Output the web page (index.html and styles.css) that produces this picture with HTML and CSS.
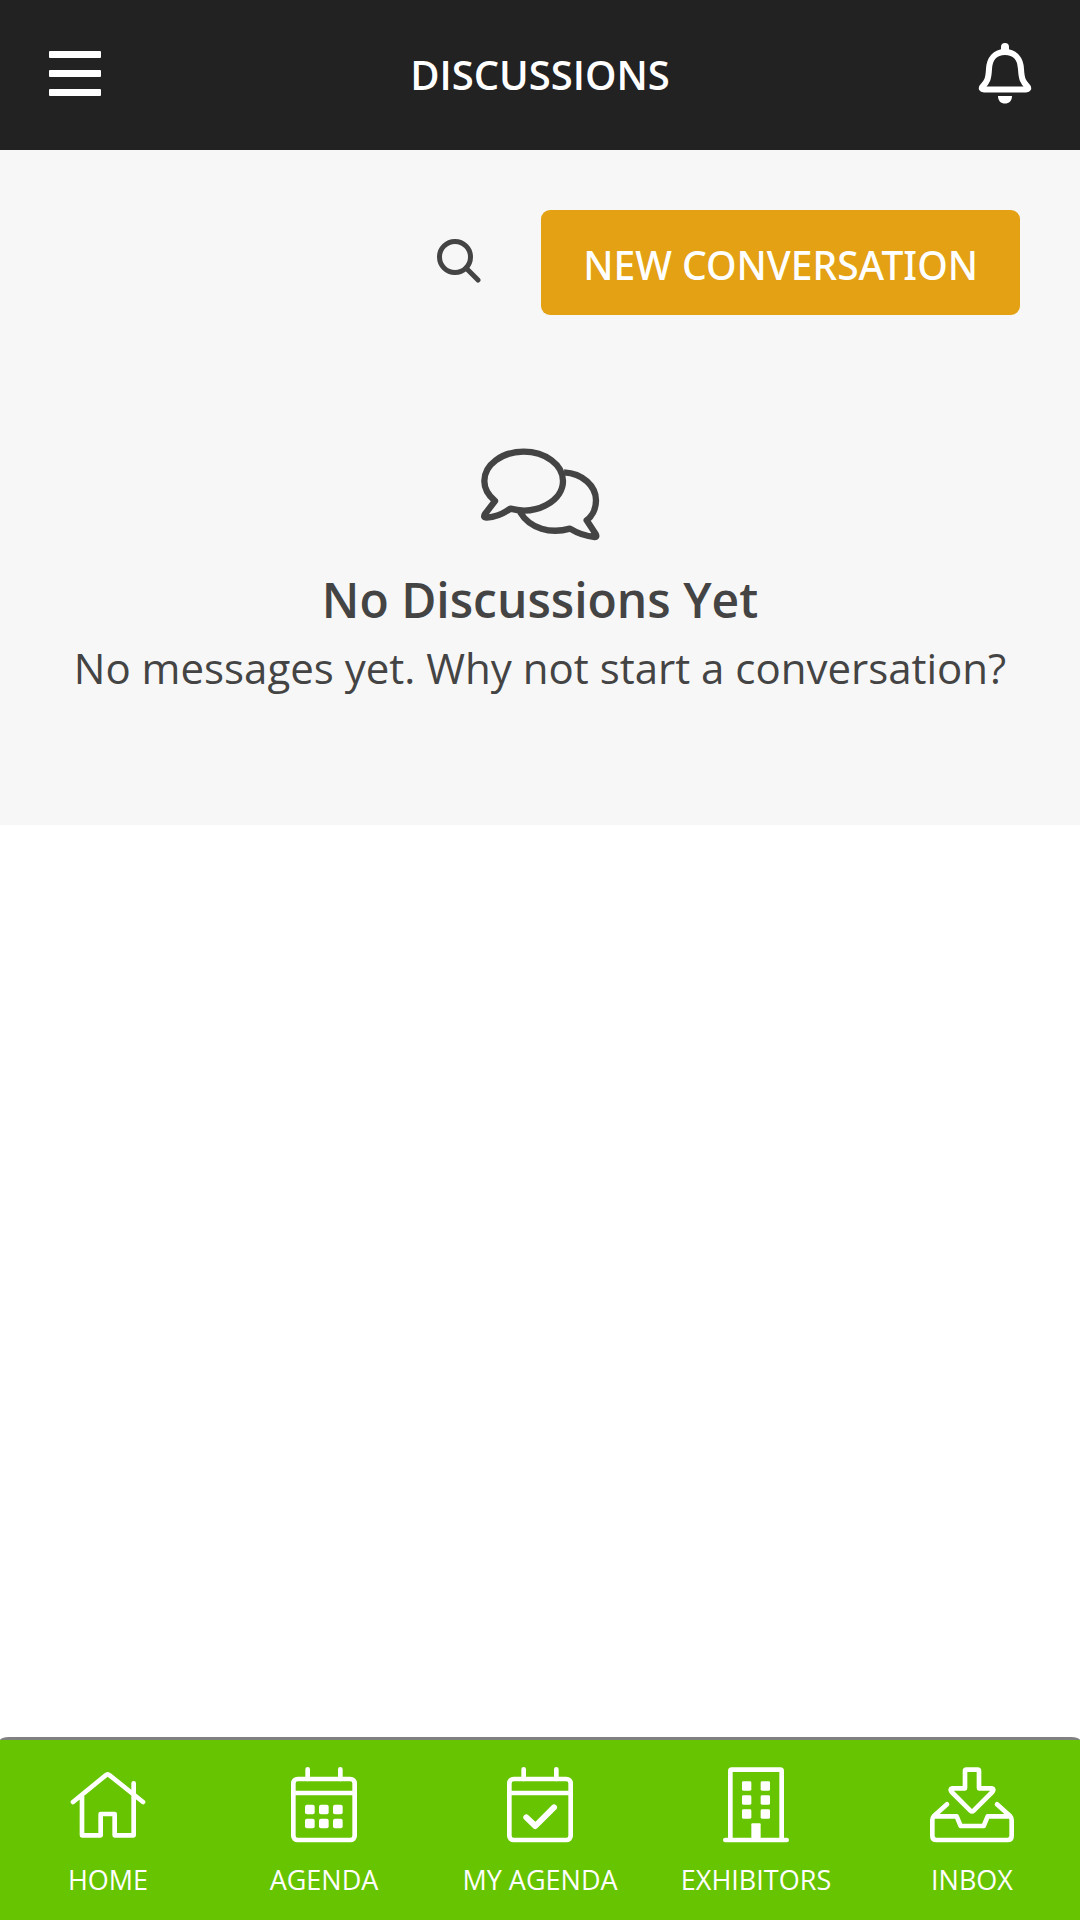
FILE: index.html
```html
<!DOCTYPE html>
<html lang="en">
<head>
  <meta charset="utf-8">
  <meta name="viewport" content="width=device-width, initial-scale=1">
  <title>Discussions</title>
  <link rel="stylesheet" href="styles.css">
</head>
<body>
  <header class="topbar">
    <button class="icon-button" type="button" aria-label="Menu">
      <svg class="menu-icon" viewBox="0 0 54 46" aria-hidden="true">
        <rect x="1" y="1" width="52" height="7" rx="1"/>
        <rect x="1" y="20" width="52" height="7" rx="1"/>
        <rect x="1" y="39" width="52" height="7" rx="1"/>
      </svg>
    </button>
    <h1 class="topbar-title">DISCUSSIONS</h1>
    <button class="icon-button" type="button" aria-label="Notifications">
      <svg class="bell-icon" viewBox="0 0 54 62" aria-hidden="true">
        <path class="solid" d="M23 10V5a4 4 0 0 1 8 0v5zM20 54H34C34 59 31 61.500 27 61.500S20 59 20 54z"/>
        <path class="line" d="M27 10C17 10 11.500 17 11 27C10.500 37 9 40 4.500 44.500Q2.500 47.500 6 47.500H48Q51.500 47.500 49.500 44.500C45 40 43.500 37 43 27C42.500 17 37 10 27 10z"/>
      </svg>
    </button>
  </header>

  <main class="discussions">
    <div class="toolbar">
      <button class="icon-button" type="button" aria-label="Search">
        <svg class="search-icon" viewBox="0 0 44 44" aria-hidden="true">
          <circle cx="18" cy="18" r="15.500"/>
          <path d="M29 29L41 41"/>
        </svg>
      </button>
      <button class="new-button" type="button">NEW CONVERSATION</button>
    </div>
    <section class="empty">
      <svg class="chat-icon" viewBox="0 0 360 288" aria-hidden="true">
        <path d="M45 165L15 204Q8 215 20 215Q58 212 91 188A118 88 0 0 0 249 105A118 88 0 0 0 131 17A118 88 0 0 0 13 105Q13 138 45 165z"/>
        <path d="M252 79C308 82 348 120 348 163C348 190 335 212 320 223L347 264Q352 273 344 273Q306 270 270 248C212 264 150 249 120 198"/>
      </svg>
      <h2 class="empty-title">No Discussions Yet</h2>
      <p class="empty-text">No messages yet. Why not start a conversation?</p>
    </section>
  </main>

  <nav class="tabbar" aria-label="Main">
    <a class="tab" href="#home">
      <svg class="tab-icon" viewBox="0 0 252 228" aria-hidden="true">
        <path d="M21 105L119 25Q125 19 131 25L231 105M48 88V205H104V141H146V205H203V49"/>
      </svg>
      <span>HOME</span>
    </a>
    <a class="tab" href="#agenda">
      <svg class="tab-icon" viewBox="0 0 252 228" aria-hidden="true">
        <rect x="34" y="36" width="184" height="183" rx="13"/>
        <path d="M34 78H218M77 7V36M175 7V36"/>
        <g class="solid">
          <rect x="69" y="113" width="29" height="29" rx="6"/><rect x="111" y="113" width="29" height="29" rx="6"/><rect x="153" y="113" width="29" height="29" rx="6"/>
          <rect x="69" y="155" width="29" height="29" rx="6"/><rect x="111" y="155" width="29" height="29" rx="6"/><rect x="153" y="155" width="29" height="29" rx="6"/>
        </g>
      </svg>
      <span>AGENDA</span>
    </a>
    <a class="tab" href="#my-agenda">
      <svg class="tab-icon" viewBox="0 0 252 228" aria-hidden="true">
        <rect x="34" y="36" width="184" height="183" rx="13"/>
        <path d="M34 78H218M77 7V36M175 7V36"/>
        <path class="check" d="M85 151L112 177L168 121"/>
      </svg>
      <span>MY AGENDA</span>
    </a>
    <a class="tab" href="#exhibitors">
      <svg class="tab-icon" viewBox="0 0 252 228" aria-hidden="true">
        <path d="M34 219H218M49 219V12Q49 8 53 8H199Q203 8 203 12V219"/>
        <g class="solid">
          <rect x="84" y="43" width="28" height="28" rx="4"/><rect x="140" y="43" width="28" height="28" rx="4"/>
          <rect x="84" y="85" width="28" height="28" rx="4"/><rect x="140" y="85" width="28" height="28" rx="4"/>
          <rect x="84" y="127" width="28" height="28" rx="4"/><rect x="140" y="127" width="28" height="28" rx="4"/>
          <rect x="112" y="169" width="28" height="50" rx="3"/>
        </g>
      </svg>
      <span>EXHIBITORS</span>
    </a>
    <a class="tab" href="#inbox">
      <svg class="tab-icon" viewBox="0 0 252 228" aria-hidden="true">
        <path d="M105 64V12Q105 8 109 8H143Q147 8 147 12V64H185Q194 66 187 75L131 131Q126 136 121 131L65 75Q58 66 67 64z"/>
        <path d="M51 112L11 148Q7 152 7 160V206Q7 219 20 219H232Q245 219 245 206V160Q245 152 241 148L201 112M14 148H80L92 177H161L173 148H238"/>
      </svg>
      <span>INBOX</span>
    </a>
  </nav>
</body>
</html>
```
FILE: styles.css
```css
* {
  box-sizing: border-box;
}

body {
  display: flex;
  flex-direction: column;
  min-height: 100vh;
  margin: 0;
  background: #fff;
  color: #444;
  font-family: "Open Sans", "Noto Sans", sans-serif;
}

button {
  margin: 0;
  padding: 0;
  border: 0;
  background: none;
  font: inherit;
  cursor: pointer;
}

svg {
  display: block;
}

.topbar {
  display: flex;
  align-items: center;
  justify-content: space-between;
  height: 150px;
  padding: 0 48px;
  background: #222;
  color: #fff;
}

.icon-button {
  padding-bottom: 4px;
}

.topbar-title {
  margin: 0;
  font-size: 40px;
  font-weight: 600;
  line-height: 54px;
}

.menu-icon {
  width: 54px;
  height: 46px;
  fill: #fff;
}

.bell-icon {
  width: 54px;
  height: 62px;
  fill: none;
  stroke-width: 6;
  stroke-linejoin: round;
}

.bell-icon .solid {
  fill: #fff;
}

.bell-icon .line {
  stroke: #fff;
}

.discussions {
  padding: 60px 60px 122px;
  background: #f7f7f7;
}

.toolbar {
  display: flex;
  align-items: center;
  justify-content: flex-end;
  gap: 60px;
}

.search-icon {
  width: 44px;
  height: 44px;
  fill: none;
  stroke: #444;
  stroke-width: 5;
  stroke-linecap: round;
}

.new-button {
  height: 105px;
  padding: 4px 42px 0;
  border-radius: 9px;
  background: #e3a113;
  color: #fff;
  font-family: "Noto Sans", "Open Sans", sans-serif;
  font-size: 39px;
  font-weight: 500;
}

.empty {
  display: flex;
  flex-direction: column;
  align-items: center;
  padding-top: 131px;
  text-align: center;
}

.chat-icon {
  width: 120px;
  height: 96px;
  fill: none;
  stroke: #444;
  stroke-width: 19;
  stroke-linejoin: round;
}

.empty-title {
  margin: 25px 0 0;
  font-size: 48px;
  font-weight: 600;
  line-height: 66px;
}

.empty-text {
  margin: 0;
  font-size: 42px;
  line-height: 70px;
}

.tabbar {
  position: sticky;
  bottom: 0;
  display: grid;
  grid-template-rows: 3px 1fr;
  grid-template-columns: repeat(5, 1fr);
  height: 183px;
  margin-top: auto;
  background: linear-gradient(#fff 3px, #67c400 3px);
}

.tabbar::before {
  content: "";
  grid-column: 1 / -1;
  border-radius: 9px 9px 0 0 / 3px 3px 0 0;
  background: #808080;
}

.tab {
  display: flex;
  flex-direction: column;
  align-items: center;
  gap: 18px;
  padding-top: 27px;
  color: #fff;
  font-size: 27px;
  line-height: 38px;
  text-decoration: none;
  white-space: nowrap;
}

.tab-icon {
  width: 84px;
  height: 76px;
  fill: none;
  stroke: #fff;
  stroke-width: 14;
  stroke-linecap: round;
  stroke-linejoin: round;
}

.tab-icon .solid {
  fill: #fff;
  stroke: none;
}

.tab-icon .check {
  stroke-width: 18;
}
```
